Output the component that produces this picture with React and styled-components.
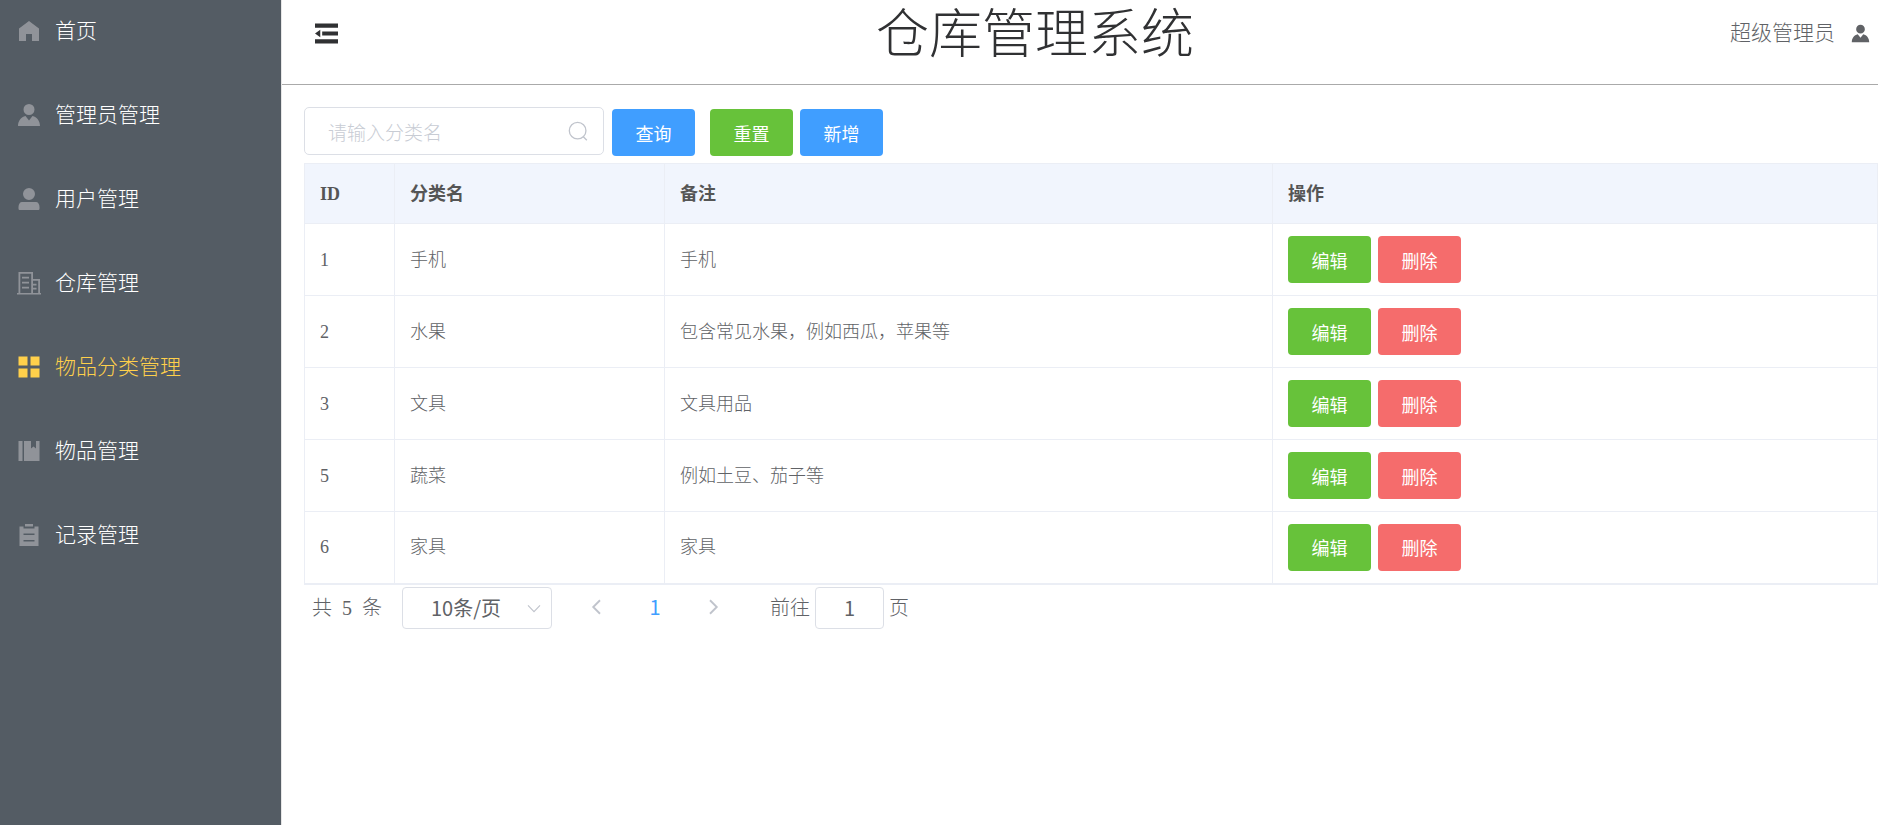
import React, { useState } from "react";
import styled, { createGlobalStyle } from "styled-components";

const serif = `"Liberation Serif", "Noto Sans CJK SC", serif`;
const sans = `"Noto Sans CJK SC", sans-serif`;

const GlobalStyle = createGlobalStyle`
  *, *::before, *::after { box-sizing: border-box; }
  body { margin: 0; background: #fff; color: #606266; font-family: ${serif}; font-weight: 300; }
  button, input, select { font-family: ${sans}; font-weight: 400; }
`;

const Page = styled.div`
  display: flex;
  min-height: 100vh;
`;

const Sidebar = styled.nav`
  flex: 0 0 282px;
  background: #545c64;
  border-right: 1px solid #e6e6e6;
`;

const MenuLink = styled.a`
  display: flex;
  align-items: center;
  gap: 14px;
  height: 84px;
  padding: 0 17px 22px;
  font-size: 21px;
  line-height: 62px;
  text-decoration: none;
  color: ${(p) => (p.$active ? "#ffd04b" : "#fff")};

  svg {
    color: ${(p) => (p.$active ? "#ffd04b" : "#909399")};
  }
`;

const Icon = styled.svg`
  display: block;
  flex: none;
  width: ${(p) => p.$size || 24}px;
  height: ${(p) => p.$size || 24}px;
  fill: currentColor;
`;

const Main = styled.div`
  flex: 1;
  min-width: 0;
`;

const Header = styled.header`
  display: flex;
  align-items: flex-start;
  height: 85px;
  padding: 0 8px 0 33px;
  border-bottom: 1px solid #aaa;
`;

const IconButton = styled.button`
  display: flex;
  align-items: center;
  justify-content: center;
  height: 66px;
  padding: 0;
  border: 0;
  background: none;
  color: #303133;
  cursor: pointer;
`;

const Title = styled.h1`
  flex: 1;
  margin: 0;
  padding-left: 2px;
  text-align: center;
  font-size: 53px;
  font-weight: 300;
  line-height: 70px;
  color: #303133;
`;

const UserButton = styled(IconButton)`
  gap: 16px;
  font-family: ${serif};
  font-size: 21px;
  font-weight: 300;
  line-height: 66px;
  color: #606266;
`;

const Content = styled.main`
  padding: 22px 0 0 22px;
`;

const Toolbar = styled.form`
  display: flex;
  align-items: flex-end;
  gap: 8px;
  height: 49px;
  margin-bottom: 7px;
`;

const SearchBox = styled.label`
  display: flex;
  align-items: center;
  align-self: flex-start;
  width: 300px;
  height: 48px;
  padding: 0 14px 0 23px;
  border: 1px solid #dcdfe6;
  border-radius: 5px;
  color: #c0c4cc;
`;

const SearchInput = styled.input`
  flex: 1;
  min-width: 0;
  padding: 0;
  border: 0;
  outline: 0;
  background: none;
  font-size: 19px;
  font-weight: 300;
  color: #606266;

  &::placeholder { color: #c8ccd4; opacity: 1; }
`;

const tones = { primary: "#409eff", success: "#67c23a", danger: "#f56c6c" };

const Button = styled.button`
  min-width: 83px;
  height: 47px;
  padding: 0 20px;
  border: 0;
  border-radius: 4px;
  background: ${(p) => tones[p.$tone]};
  font-size: 18px;
  line-height: 46px;
  color: #fff;
  cursor: pointer;
`;

const ButtonGroup = styled.div`
  display: flex;
  gap: 7px;
`;

const ToolbarGroup = styled(ButtonGroup)`
  margin-left: 7px;
`;

const Table = styled.table`
  width: 100%;
  table-layout: fixed;
  border-collapse: collapse;
  border-bottom: 2px solid #ebeef5;
  font-size: 18px;
  line-height: 22px;
`;

const Cell = styled.td`
  height: 72px;
  padding: 0 15px;
  border: 1px solid #ebeef5;
  text-align: left;
  font-weight: 300;
`;

const HeadCell = styled(Cell).attrs({ as: "th", scope: "col" })`
  height: 60px;
  background: #f1f5fd;
  font-weight: 700;
  color: #555;
`;

const Pagination = styled.div`
  display: flex;
  align-items: center;
  height: 42px;
  margin-top: 2px;
  padding-left: 8px;
  font-size: 20px;
  line-height: 40px;
`;

const Total = styled.span`
  display: flex;
  gap: 10px;
  margin-right: 20px;
`;

const SelectBox = styled.div`
  display: grid;
  width: 150px;
  height: 42px;

  > * { grid-area: 1 / 1; }

  > svg {
    place-self: center end;
    margin-right: 9px;
    color: #c0c4cc;
    pointer-events: none;
  }
`;

const Select = styled.select`
  appearance: none;
  padding: 0 28px;
  border: 1px solid #dcdfe6;
  border-radius: 4px;
  background: #fff;
  font-size: 20px;
  color: #606266;
`;

const Pager = styled.div`
  display: flex;
  align-items: center;
  margin: 0 28px 0 16px;
`;

const PageButton = styled.button`
  display: flex;
  align-items: center;
  justify-content: center;
  width: 46px;
  height: 42px;
  margin: 0 6px;
  padding: 0 0 2px;
  border: 0;
  background: none;
  font-size: 20px;
  color: ${(p) => (p.$current ? "#409eff" : "#c0c4cc")};
`;

const Jump = styled.label`
  display: flex;
  align-items: center;
  gap: 5px;
`;

const JumpInput = styled.input`
  width: 69px;
  height: 42px;
  padding: 0;
  border: 1px solid #dcdfe6;
  border-radius: 4px;
  text-align: center;
  font-size: 20px;
  color: #606266;
`;

const paths = {
  home: "M12 2 22 9.500V22h-7v-7H9v7H2V9.500Z",
  custom:
    "M12 1a5.500 5.500 0 1 1 0 11 5.500 5.500 0 0 1 0-11ZM8.500 13 12 17.500 15.500 13C20 14 23 18 23 23H1c0-5 3-9 7.500-10Z",
  user: "M12 1a6 6 0 1 1 0 12 6 6 0 0 1 0-12ZM5 15h14c2 0 3.500 2 3.500 5v1.500c0 1-.5 1.500-1.500 1.500H3c-1 0-1.500-.5-1.500-1.500V20c0-3 1.500-5 3.500-5Z",
  building:
    "M1.500 1H16v7h7v14h1v1.500H0V22h1.500ZM3.300 2.700V22h10.900V2.700ZM16 9.700V22h5.200V9.700ZM5 5.700h7v1.800H5ZM5 10.700h7v1.800H5ZM5 15.700h7v1.800H5ZM16 12.700h3.500v1.800H16ZM16 16.700h3.500v1.800H16Z",
  grid: "M1.500 1.500h9v9h-9ZM13.500 1.500h9v9h-9ZM1.500 13.500h9v9h-9ZM13.500 13.500h9v9h-9Z",
  book: "M1.500 2H5.500v20H1.500ZM7 2h7v7.500L16.500 7.500 19 9.500V2h3.500v20H7Z",
  order:
    "M8 1h8v2.500H8ZM2.500 3.500h4V5.500h11V3.500h4V23H2.500ZM6.500 10.500V12h11v-1.500ZM6.500 17v1.500h11V17Z",
  fold: "M0 1.500h24v4.500H0ZM7.500 9.800h16.500v4.400H7.500ZM0 12 5.500 8v8ZM0 18h24v4.500H0Z",
};

const Glyph = ({ name, size }) => (
  <Icon viewBox="0 0 24 24" $size={size} aria-hidden="true">
    <path fillRule="evenodd" d={paths[name]} />
  </Icon>
);

const LineGlyph = ({ d, size, width = 2 }) => (
  <Icon viewBox="0 0 24 24" $size={size} aria-hidden="true">
    <path d={d} fill="none" stroke="currentColor" strokeWidth={width} />
  </Icon>
);

const menu = [
  ["home", "首页"],
  ["custom", "管理员管理"],
  ["user", "用户管理"],
  ["building", "仓库管理"],
  ["grid", "物品分类管理"],
  ["book", "物品管理"],
  ["order", "记录管理"],
];

const rows = [
  [1, "手机", "手机"],
  [2, "水果", "包含常见水果，例如西瓜，苹果等"],
  [3, "文具", "文具用品"],
  [5, "蔬菜", "例如土豆、茄子等"],
  [6, "家具", "家具"],
];

export default function App() {
  const [query, setQuery] = useState("");
  const [page, setPage] = useState("1");

  return (
    <>
      <GlobalStyle />
      <Page>
        <Sidebar>
          {menu.map(([icon, label]) => (
            <MenuLink key={label} href="#" $active={icon === "grid"}>
              <Glyph name={icon} />
              {label}
            </MenuLink>
          ))}
        </Sidebar>
        <Main>
          <Header>
            <IconButton type="button" aria-label="折叠菜单">
              <Glyph name="fold" size={23} />
            </IconButton>
            <Title>仓库管理系统</Title>
            <UserButton type="button">
              超级管理员
              <Glyph name="custom" size={19} />
            </UserButton>
          </Header>
          <Content>
            <Toolbar onSubmit={(e) => e.preventDefault()}>
              <SearchBox>
                <SearchInput
                  aria-label="分类名"
                  placeholder="请输入分类名"
                  value={query}
                  onChange={(e) => setQuery(e.target.value)}
                />
                <LineGlyph
                  size={21}
                  width={1.5}
                  d="M11 1.500a9.500 9.500 0 1 1 0 19 9.500 9.500 0 0 1 0-19ZM17.500 18 21.500 22"
                />
              </SearchBox>
              <Button $tone="primary">查询</Button>
              <ToolbarGroup>
                <Button type="button" $tone="success" onClick={() => setQuery("")}>
                  重置
                </Button>
                <Button type="button" $tone="primary">新增</Button>
              </ToolbarGroup>
            </Toolbar>
            <Table>
              <colgroup>
                <col width="90" />
                <col width="270" />
                <col width="608" />
                <col />
              </colgroup>
              <thead>
                <tr>
                  <HeadCell>ID</HeadCell>
                  <HeadCell>分类名</HeadCell>
                  <HeadCell>备注</HeadCell>
                  <HeadCell>操作</HeadCell>
                </tr>
              </thead>
              <tbody>
                {rows.map(([id, name, remark]) => (
                  <tr key={id}>
                    <Cell>{id}</Cell>
                    <Cell>{name}</Cell>
                    <Cell>{remark}</Cell>
                    <Cell>
                      <ButtonGroup>
                        <Button type="button" $tone="success">编辑</Button>
                        <Button type="button" $tone="danger">删除</Button>
                      </ButtonGroup>
                    </Cell>
                  </tr>
                ))}
              </tbody>
            </Table>
            <Pagination>
              <Total>
                <span>共</span>
                <span>5</span>
                <span>条</span>
              </Total>
              <SelectBox>
                <Select aria-label="每页条数">
                  <option>10条/页</option>
                </Select>
                <LineGlyph size={18} width={1.5} d="M4 8.500 12 17l8-8.500" />
              </SelectBox>
              <Pager>
                <PageButton type="button" aria-label="上一页">
                  <LineGlyph size={18} width={2.5} d="M16 3 7 12l9 9" />
                </PageButton>
                <PageButton type="button" $current>1</PageButton>
                <PageButton type="button" aria-label="下一页">
                  <LineGlyph size={18} width={2.5} d="M8 3l9 9-9 9" />
                </PageButton>
              </Pager>
              <Jump>
                前往
                <JumpInput value={page} onChange={(e) => setPage(e.target.value)} />
                页
              </Jump>
            </Pagination>
          </Content>
        </Main>
      </Page>
    </>
  );
}
